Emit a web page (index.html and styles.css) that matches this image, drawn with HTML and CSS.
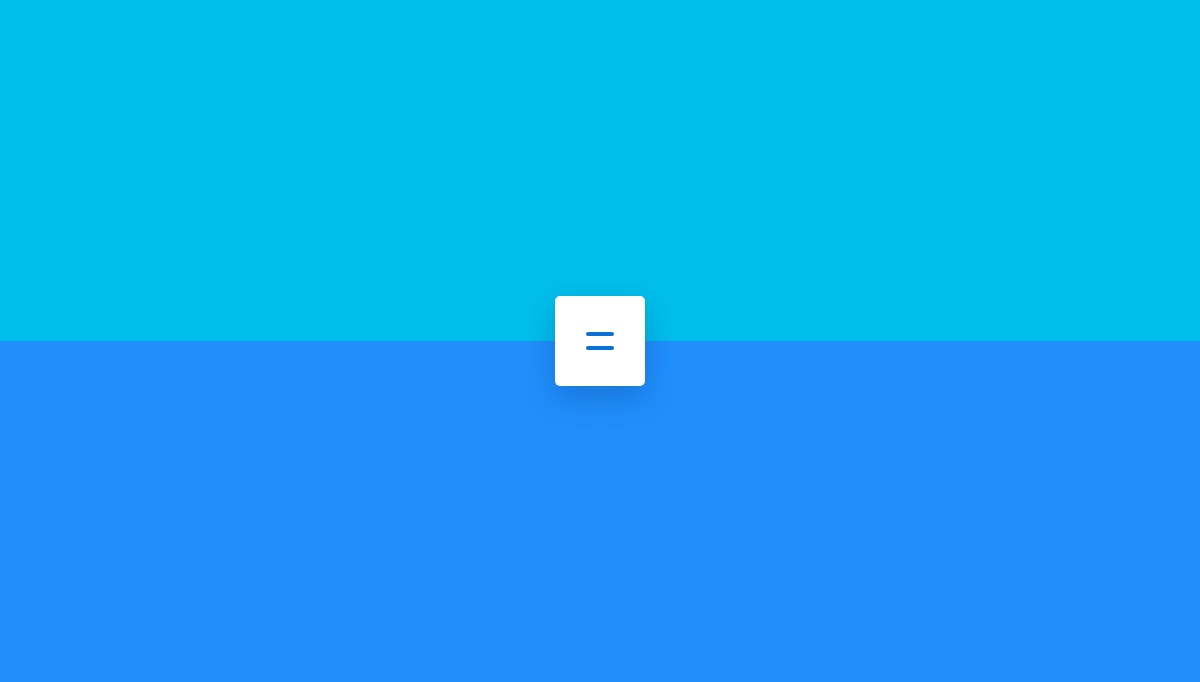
FILE: index.html
```html
<!DOCTYPE html>
<html>
<head>
<meta charset="utf-8">
<link rel="stylesheet" href="styles.css">
</head>
<body>
<div class="page">
  <div class="half top"></div>
  <div class="half bottom"></div>
  <button class="menu-btn" aria-label="Menu">
    <span class="bar"></span>
    <span class="bar"></span>
  </button>
</div>
</body>
</html>
```

FILE: styles.css
```css
html, body {
  margin: 0;
  padding: 0;
  height: 100%;
}
.page {
  position: relative;
  height: 682px;
  display: flex;
  flex-direction: column;
}
.half {
  flex: 1;
}
.top {
  background: #00beea;
}
.bottom {
  background: #208ffb;
}
.menu-btn {
  position: absolute;
  left: 555px;
  top: 296px;
  width: 90px;
  height: 90px;
  border: 0;
  padding: 0;
  background: #ffffff;
  border-radius: 5px;
  box-shadow: 0 12px 30px rgba(0, 40, 120, 0.25);
  display: flex;
  flex-direction: column;
  align-items: center;
  justify-content: center;
  gap: 10px;
}
.bar {
  display: block;
  width: 28px;
  height: 4px;
  border-radius: 2px;
  background: #0a6fd6;
}
```
